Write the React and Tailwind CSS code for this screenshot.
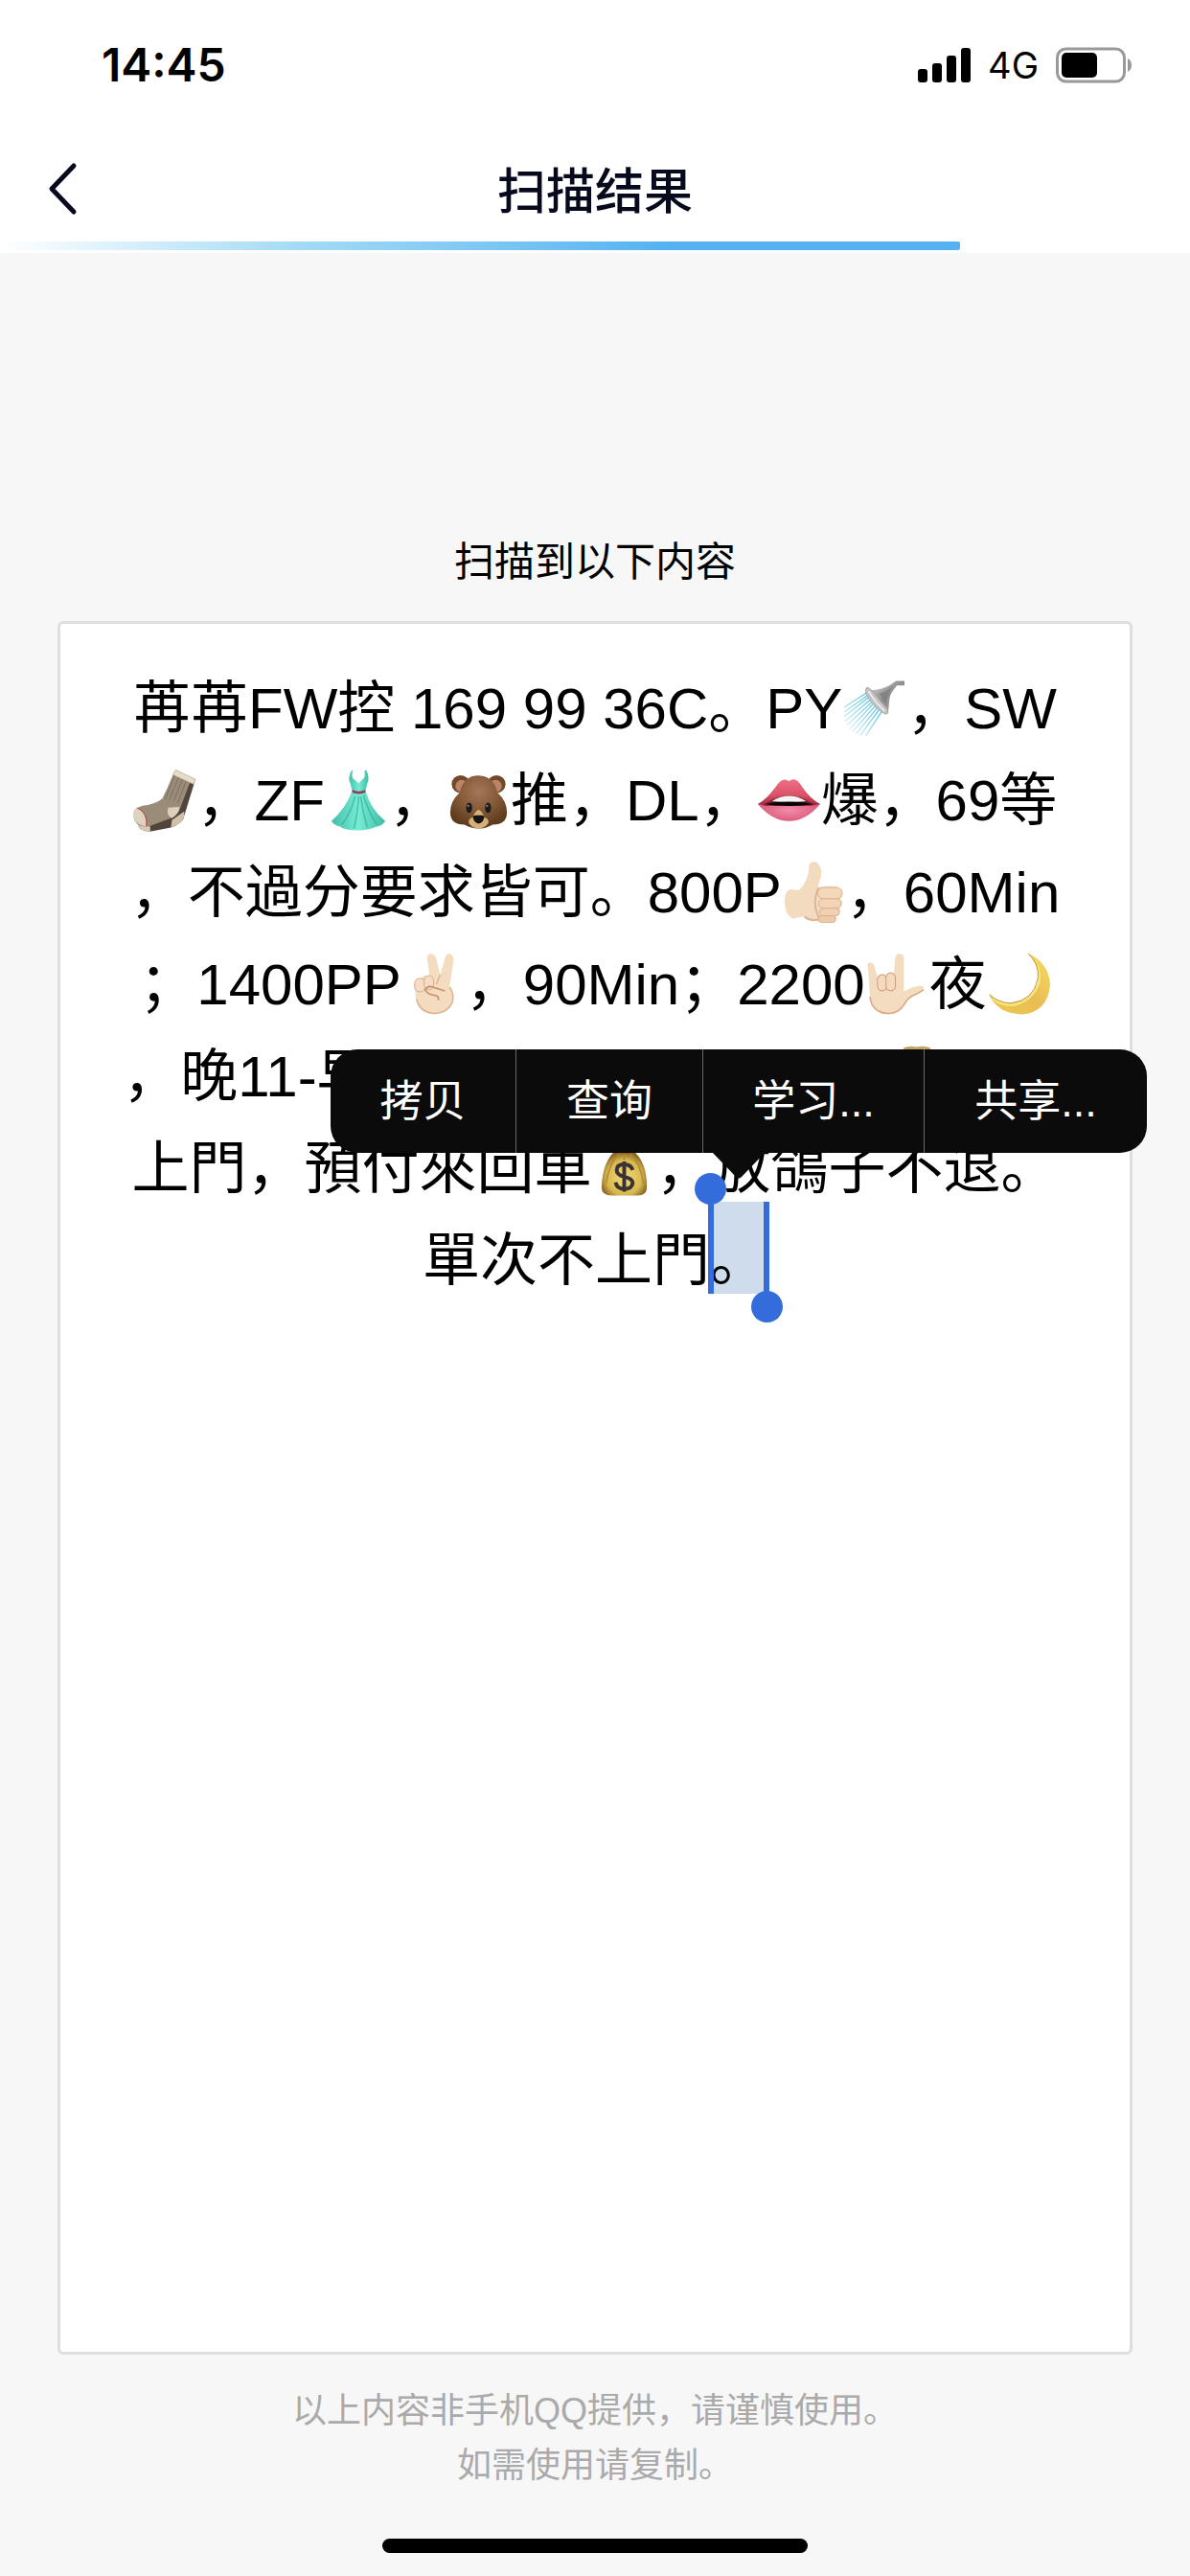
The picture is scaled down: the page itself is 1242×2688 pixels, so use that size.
import React from "react";

/* ================= EMOJI ================= */
const Emoji = ({ label, children }) => (
  <svg
    role="img"
    aria-label={label}
    viewBox="0 0 68 68"
    className="inline-block w-[67px] h-[68px] align-[-12px]"
  >
    {children}
  </svg>
);

const Shower = () => (
  <Emoji label="🚿">
    <defs>
      <linearGradient id="water" x1="1" y1="0" x2="0" y2="1">
        <stop offset="0.2" stopColor="#4fc0d8" />
        <stop offset="1" stopColor="#4fc0d8" stopOpacity="0.05" />
      </linearGradient>
      <linearGradient id="steel" x1="0" y1="0" x2="1" y2="1">
        <stop offset="0" stopColor="#e4e4e4" />
        <stop offset="0.5" stopColor="#8d8d8d" />
        <stop offset="1" stopColor="#c9c9c9" />
      </linearGradient>
    </defs>
    <g stroke="url(#water)" strokeWidth="1.3">
      <path d="M27 18 2 34M29 20 2 39M30 22 2 44M32 24 3 49M34 26 5 53M35 28 8 57M37 30 11 60M39 32 15 62M41 34 19 64M43 37 25 64" />
    </g>
    <path d="M27 15C36 17 43 14 50 11L57 6H66V11H58L54 16C48 23 51 32 48 41Z" fill="url(#steel)" />
    <path d="M39 19Q49 17 53 11L48 22Q46 30 49 36Z" fill="#777" opacity="0.6" />
    <path d="M25 15Q26 11 30 15L48 36Q50 42 45 41Q31 32 25 19Z" fill="#c4c4c4" stroke="#999" strokeWidth="0.8" />
    <path d="M28 17Q35 29 45 38" stroke="#f5f5f5" strokeWidth="1.5" fill="none" />
  </Emoji>
);

const Sock = () => (
  <Emoji label="🧦">
    <g transform="translate(-3 0)">
      <path d="M47 7 68 16 56 55Q53 60 43 64L22 68Q9 69 8 60L34 45Z" fill="#51443b" />
      <path d="M8 59 21 63V68Q10 68 8 61Z" fill="#d9cbb8" />
      <path d="M44 56 57 47Q58 54 53 59L43 64Z" fill="#d0c0a8" />
      <path d="M46 6 64 14 53 43Q51 51 43 54L22 62Q6 66 3 52Q3 44 12 41Q28 39 34 33Q40 21 46 6Z" fill="#9b8c7a" />
      <path d="M8 42Q2 45 3 52Q5 61 17 63Q18 48 7 43Z" fill="#dfd2c0" />
      <path d="M7 43Q19 48 17 63" fill="none" stroke="#b14141" strokeWidth="1" />
      <path d="M40 43 52 42Q52 49 44 54Q38 52 40 43Z" fill="#ddd0bb" />
      <path d="M48 3 69 13 67 18 45 8Z" fill="#e7dccb" stroke="#b7a78f" strokeWidth="0.8" />
      <path d="M47 9 37 34M51 11 41 35M55 13 46 36M59 15 50 38" stroke="#7b6d5e" strokeWidth="1" />
    </g>
  </Emoji>
);

const Dress = () => (
  <Emoji label="👗">
    <defs>
      <linearGradient id="dress" x1="0" x2="1">
        <stop offset="0" stopColor="#42bfa8" />
        <stop offset="0.5" stopColor="#77ecd4" />
        <stop offset="1" stopColor="#3ebda5" />
      </linearGradient>
    </defs>
    <path d="M28 4Q24 12 27 17L29 25H43L45 17Q48 12 44 3L42 4Q43 10 41 12L36 17 30 12Q28 9 30 3Z" fill="url(#dress)" />
    <path d="M29 25H43Q49 45 64 57Q61 62 55 63Q46 67 35 67Q21 67 16 63Q9 61 7 57Q22 44 29 25Z" fill="url(#dress)" />
    <path d="M32 31Q28 48 18 61M36 31Q35 48 31 65M38 31Q40 47 45 64M41 30Q46 47 55 61" fill="none" stroke="#2ea994" strokeOpacity="0.6" strokeWidth="1.6" />
    <path d="M29 24Q36 27 43 24V27Q36 30 29 27Z" fill="#8f3b64" />
  </Emoji>
);

const Bear = () => (
  <Emoji label="🐻">
    <defs>
      <radialGradient id="fur" cx="0.5" cy="0.3" r="0.65">
        <stop offset="0" stopColor="#a5775a" />
        <stop offset="0.6" stopColor="#805735" />
        <stop offset="1" stopColor="#5e3c1e" />
      </radialGradient>
    </defs>
    <circle cx="15" cy="18" r="9.5" fill="#71492a" />
    <circle cx="53" cy="18" r="9.5" fill="#71492a" />
    <circle cx="16" cy="20" r="6.5" fill="#bd8367" />
    <circle cx="52" cy="20" r="6.5" fill="#bd8367" />
    <path d="M34 9Q50 9 54 27Q64 36 64 48Q64 61 49 61Q42 65 34 65Q26 65 19 61Q4 61 4 48Q4 36 14 27Q18 9 34 9Z" fill="url(#fur)" />
    <path d="M34 45Q38 47 40 53Q46 55 44 60Q40 65 34 65Q28 65 24 60Q22 55 28 53Q30 47 34 45Z" fill="#d5b077" />
    <ellipse cx="24" cy="43" rx="3.2" ry="5.5" fill="#1c1b1b" />
    <ellipse cx="44" cy="43" rx="3.2" ry="5.5" fill="#1c1b1b" />
    <circle cx="23" cy="41" r="1.1" fill="#888" />
    <circle cx="43" cy="41" r="1.1" fill="#888" />
    <path d="M28 53Q28 51 31 51H37Q40 51 40 53Q39 59 34 60Q29 59 28 53Z" fill="#171515" />
  </Emoji>
);

const Lips = () => (
  <Emoji label="👄">
    <defs>
      <linearGradient id="upperLip" x1="0" x2="0" y1="0" y2="1">
        <stop offset="0" stopColor="#ee7085" />
        <stop offset="0.6" stopColor="#dc5168" />
        <stop offset="1" stopColor="#98263a" />
      </linearGradient>
      <radialGradient id="lowerLip">
        <stop offset="0" stopColor="#f48bab" />
        <stop offset="1" stopColor="#d95d7c" />
      </radialGradient>
    </defs>
    <path d="M1 39 33 34 67 39Q52 57 34 57Q16 57 1 39Z" fill="url(#lowerLip)" />
    <path d="M1 39Q10 34 19 22Q27 9 34 15Q41 9 48 21Q57 34 67 39L57 41H10Z" fill="url(#upperLip)" />
    <path d="M10 38Q34 22 58 38Z" fill="#7a2434" />
    <path d="M16 36Q34 25 52 36Q34 38 16 36Z" fill="#f5f5f5" />
    <path d="M7 39Q34 34 61 39Q34 43 7 39Z" fill="#080507" />
  </Emoji>
);

const ThumbsUp = () => (
  <Emoji label="👍🏻">
    <path d="M29 5Q35 -1 40 7Q43 12 41 20L38 30 42 29Q60 27 63 33Q66 38 62 42Q66 48 61 52Q64 58 57 60Q60 66 51 67Q37 68 23 61L11 63Q3 58 3 45Q3 34 9 32L18 33Q29 23 29 5Z" fill="#f3dbc0" />
    <path d="M39 30Q31 47 40 63Q32 67 24 61" fill="none" stroke="#dfb594" strokeWidth="2" />
    <rect x="38" y="30" width="26" height="12" rx="6" fill="#f3d8bc" stroke="#dfb08c" strokeWidth="1" />
    <rect x="39" y="42" width="24" height="10" rx="5" fill="#f2d5b7" stroke="#dfb08c" strokeWidth="1" />
    <rect x="40" y="52" width="21" height="8" rx="4" fill="#f0d1b2" stroke="#dfb08c" strokeWidth="1" />
    <rect x="39" y="60" width="18" height="7" rx="3" fill="#edcaa9" stroke="#dfb08c" strokeWidth="1" />
  </Emoji>
);

const Victory = () => (
  <Emoji label="✌🏻">
    <path d="M27 7Q28 2 33 3Q36 4 37 8L41 25 46 8Q47 2 52 3Q56 5 55 11L51 38Q56 44 55 51Q53 66 35 67Q17 66 15 50L14 33Q15 28 20 29Q25 24 30 27Z" fill="#f4dcc0" />
    <path d="M37 35 41 25M51 38Q56 44 54 54Q49 65 35 66Q20 65 16 51" fill="none" stroke="#ddb18e" strokeWidth="1.4" />
    <rect x="14" y="29" width="11" height="14" rx="5" fill="#f5dec5" stroke="#d8a887" strokeWidth="1" />
    <rect x="24" y="26" width="10" height="15" rx="5" fill="#f5dec5" stroke="#d8a887" strokeWidth="1" />
    <path d="M25 41Q28 36 33 38L46 42M25 41Q28 46 36 47Q40 48 39 52" fill="none" stroke="#c78e6b" strokeWidth="1.6" />
  </Emoji>
);

const LoveYou = () => (
  <Emoji label="🤟🏻">
    <path d="M3 18Q1 13 5 12Q9 12 10 17L14 31 30 29 32 6Q33 2 37 3Q41 3 41 8V43Q46 39 56 37Q63 36 62 41Q58 45 52 47Q45 50 40 60Q35 67 24 67Q7 66 5 47Z" fill="#f4dcc0" />
    <path d="M5 48Q7 65 24 66Q35 66 41 57Q45 49 53 46L62 41" fill="none" stroke="#d9a985" strokeWidth="1.6" />
    <rect x="13" y="25" width="10" height="17" rx="5" fill="#f4dabe" stroke="#d3a07d" strokeWidth="1.1" />
    <rect x="22" y="23" width="10" height="19" rx="5" fill="#f4dabe" stroke="#d3a07d" strokeWidth="1.1" />
  </Emoji>
);

const Moon = () => (
  <Emoji label="🌙">
    <defs>
      <linearGradient id="moon" x1="0" y1="1" x2="1" y2="0">
        <stop offset="0" stopColor="#efc94e" />
        <stop offset="0.5" stopColor="#e8bd55" />
        <stop offset="1" stopColor="#f5dd62" />
      </linearGradient>
    </defs>
    <path d="M43 2Q66 12 67 36Q64 65 37 67Q10 66 2 45Q13 57 27 55Q52 51 55 28Q55 12 43 2Z" fill="url(#moon)" />
    <path d="M48 7Q58 19 55 34Q47 54 27 57Q14 57 6 50" fill="none" stroke="#fae675" strokeWidth="2.5" />
    <path d="M44 3Q56 13 54 29Q50 52 26 55Q12 55 3 46" fill="none" stroke="#a77a30" strokeWidth="0.8" />
  </Emoji>
);

const MoneyBag = () => (
  <Emoji label="💰">
    <defs>
      <radialGradient id="bag" cx="0.5" cy="0.6" r="0.55">
        <stop offset="0" stopColor="#f2db78" />
        <stop offset="0.7" stopColor="#d9b94f" />
        <stop offset="1" stopColor="#8b6624" />
      </radialGradient>
    </defs>
    <path d="M20 5Q27 2 34 4Q42 2 49 5L44 16H25Z" fill="#c5a565" />
    <path d="M25 16H43Q58 28 58 55Q58 64 48 64H21Q10 64 10 55Q11 28 25 16Z" fill="url(#bag)" />
    <path d="M29 19Q17 32 15 51M40 19Q52 31 54 51M34 20V27" fill="none" stroke="#ae8737" strokeWidth="1.5" />
    <path d="M24 15H44V19H24Z" fill="#73441d" />
    <path d="M34 28V60M43 37Q41 31 34 31Q26 31 26 37Q26 42 34 44Q43 46 43 51Q42 57 34 57Q26 57 25 50" fill="none" stroke="#3b3234" strokeWidth="4" />
  </Emoji>
);

/* ================= STATUS BAR ================= */
const StatusBar = () => (
  <div className="flex h-[132px] items-center justify-between pl-[106px] pr-15 pt-1 font-['Inter',sans-serif] text-black">
    <span className="text-[48px] font-semibold">14:45</span>
    <div className="flex items-center gap-[18px]">
      <svg viewBox="0 0 55 36" className="h-9 w-[55px]" aria-label="信号">
        <rect x="0" y="22" width="10" height="14" rx="3" />
        <rect x="15" y="16" width="10" height="20" rx="3" />
        <rect x="30" y="8" width="10" height="28" rx="3" />
        <rect x="45" y="0" width="10" height="36" rx="3" />
      </svg>
      <span className="text-[38px]">4G</span>
      <svg viewBox="0 0 80 38" className="h-[38px] w-20" aria-label="电池">
        <rect x="1.5" y="2" width="70" height="34" rx="9" fill="none" stroke="#999" strokeWidth="3" />
        <rect x="6" y="6" width="37" height="26" rx="5" />
        <path d="M75 12Q79 14 79 19T75 26Z" fill="#999" />
      </svg>
    </div>
  </div>
);

/* ================= TITLE BAR ================= */
const TitleBar = () => (
  <header className="relative flex h-[132px] items-center justify-center pt-1">
    <button type="button" aria-label="返回" className="absolute left-12 top-9">
      <svg viewBox="0 0 34 58" className="h-[58px] w-[34px]" fill="none">
        <path d="M29 5 6 29 29 53" stroke="#060a1c" strokeWidth="5" strokeLinecap="round" strokeLinejoin="round" />
      </svg>
    </button>
    <h1 className="text-[51px] font-medium leading-none text-[#060a1c]">扫描结果</h1>
    <div className="absolute bottom-[3px] left-0 h-[9px] w-[1002px] max-w-full rounded-r-xs bg-linear-to-r from-white via-[#a5dcf6] via-30% to-[#54b2f0] to-70%" />
  </header>
);

/* ================= SELECTION MENU ================= */
const SelectionMenu = () => (
  <div className="absolute -left-[396px] -top-[159px] z-10 text-[45px] leading-none text-white">
    <div className="flex h-[108px] divide-x divide-[#6a6a6a] overflow-hidden rounded-[28px] bg-[#0b0b0b]">
      <button type="button" className="w-[194px]">拷贝</button>
      <button type="button" className="w-[195px]">查询</button>
      <button type="button" className="w-[231px]">学习...</button>
      <button type="button" className="w-[232px]">共享...</button>
    </div>
    <svg viewBox="0 0 56 28" className="absolute left-[398px] top-[107px] h-7 w-14">
      <path d="M0 0H56L31 26Q28 29 25 26Z" fill="#0b0b0b" />
    </svg>
  </div>
);

/* highlight and handles sit over the line of text */
const Selection = ({ children }) => (
  <span className="relative inline-block align-top">
    <span className="absolute inset-x-0 -top-3.5 h-24 bg-[#cfdcec]">
      <SelectionMenu />
      <span className="absolute inset-y-0 -left-0.5 z-20 w-1.5 bg-[#346ddb]" />
      <span className="absolute -left-4 -top-[30px] z-20 size-[33px] rounded-full bg-[#346ddb]" />
      <span className="absolute inset-y-0 -right-0.5 z-20 w-1.5 bg-[#346ddb]" />
      <span className="absolute -bottom-[30px] -right-4 z-20 size-[33px] rounded-full bg-[#346ddb]" />
    </span>
    <span className="relative">{children}</span>
  </span>
);

const App = () => {
  return (
    <div className="flex min-h-screen flex-col overflow-x-hidden bg-[#f7f7f7] font-['Liberation_Sans','Noto_Sans_CJK_SC',sans-serif]">
      <div className="bg-white">
        <StatusBar />
        <TitleBar />
      </div>

      <main className="flex flex-1 flex-col px-15">
        <h2 className="pb-[30px] pt-[292px] text-center text-[42px] leading-[62px] text-black">
          扫描到以下内容
        </h2>

        <section className="flex-1 whitespace-nowrap rounded-md border-3 border-[#dddfdf] bg-white pt-[41px] text-center text-[60px] leading-[96px] text-black">
          <p>苒苒FW控 169 99 36C。PY<Shower />，SW</p>
          <p><Sock />，ZF<Dress />，<Bear />推，DL，<Lips />爆，69等</p>
          <p>，不過分要求皆可。800P<ThumbsUp />，60Min</p>
          <p>；1400PP<Victory />，90Min；2200<LoveYou />夜<Moon /></p>
          <p>
            ，晚11-早<span className="inline-block w-[532px]" />
            <MoneyBag />
            <span className="inline-block w-[124px]" />
          </p>
          <p>上門，預付來回車<MoneyBag />，放鴿子不退。</p>
          <p>單次不上門<Selection>。</Selection></p>
        </section>
      </main>

      <footer className="pb-6 pt-[30px] text-center text-[36px] leading-[57px] text-[#aaa]">
        <p>以上内容非手机QQ提供，请谨慎使用。</p>
        <p>如需使用请复制。</p>
        <div className="mx-auto mt-12 h-[15px] w-[444px] rounded-full bg-black" />
      </footer>
    </div>
  );
};

export default App;
